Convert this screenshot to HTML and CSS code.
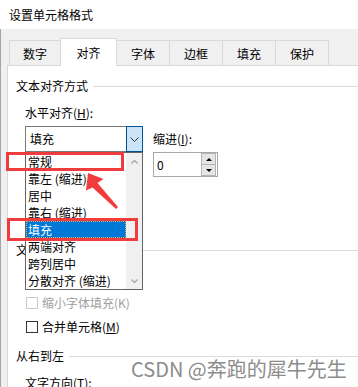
FILE: index.html
```html
<!DOCTYPE html>
<html lang="zh-CN">
<head>
    <meta charset="UTF-8">
    <meta name="viewport" content="width=device-width, initial-scale=1.0">
    <title>设置单元格格式</title>
    <link rel="stylesheet" href="styles.css">
</head>
<body>
    <div class="titlebar">设置单元格格式</div>

    <div class="dialog">
        <div class="tabs">
            <div class="tab tab-first">数字</div>
            <div class="tab active">对齐</div>
            <div class="tab">字体</div>
            <div class="tab">边框</div>
            <div class="tab">填充</div>
            <div class="tab tab-last">保护</div>
        </div>

        <div class="panel">
            <div class="group-title group-align">文本对齐方式</div>
            <div class="field-label">水平对齐(<u>H</u>):</div>
            <div class="align-row">
                <div class="combo open">
                    <span class="combo-text">填充</span>
                    <span class="combo-btn">
                        <svg width="9" height="5" viewBox="0 0 9 5"><polyline points="0.5,0.5 4.5,4.5 8.5,0.5" fill="none" stroke="#333" stroke-width="1"/></svg>
                    </span>
                    <div class="dropdown">
                        <ul class="dropdown-items">
                            <li>常规</li>
                            <li>靠左 (缩进)</li>
                            <li>居中</li>
                            <li>靠右 (缩进)</li>
                            <li class="selected">填充</li>
                            <li>两端对齐</li>
                            <li>跨列居中</li>
                            <li>分散对齐 (缩进)</li>
                        </ul>
                        <div class="scrollbar">
                            <svg width="7" height="4" viewBox="0 0 7 4"><polyline points="0.5,3.5 3.5,0.5 6.5,3.5" fill="none" stroke="#a6a6a6" stroke-width="1.3"/></svg>
                            <svg width="7" height="4" viewBox="0 0 7 4"><polyline points="0.5,0.5 3.5,3.5 6.5,0.5" fill="none" stroke="#a6a6a6" stroke-width="1.3"/></svg>
                        </div>
                    </div>
                </div>
                <div class="indent">
                    <div class="indent-label">缩进(<u>I</u>):</div>
                    <div class="spinner">
                        <span class="spin-value">0</span>
                        <span class="spin-btns">
                            <span class="spin-btn spin-up"></span>
                            <span class="spin-btn spin-down"></span>
                        </span>
                    </div>
                </div>
            </div>

            <!-- 文本控制 group: mostly hidden behind the open list -->
            <div class="group-title group-control">文</div>
            <div class="check-row check-first disabled"><span class="check"></span>缩小字体填充(K)</div>
            <div class="check-row"><span class="check"></span>合并单元格(<u>M</u>)</div>

            <div class="group-title group-rtl">从右到左</div>
            <div class="field-label field-dir">文字方向(<u>T</u>):</div>
        </div>
    </div>

    <div class="mark mark-normal"></div>
    <div class="mark mark-fill"></div>
    <svg class="arrow" width="358" height="387" viewBox="0 0 358 387">
        <polygon points="88,173 103.5,179 97.5,183 118,207 116,209 92.5,187.5 86,190.5" fill="#f03c3c"/>
    </svg>

    <div class="watermark">CSDN @奔跑的犀牛先生</div>
</body>
</html>
```

FILE: styles.css
```css
* {
    box-sizing: border-box;
}
body {
    margin: 0;
    width: 358px;
    height: 387px;
    overflow: hidden;
    position: relative;
    font-family: "Noto Sans CJK SC", "Microsoft YaHei", sans-serif;
    font-size: 12px;
    color: #000;
    background: #fff;
}
u {
    text-decoration-thickness: 1px;
    text-underline-offset: 1px;
}
.titlebar {
    height: 29px;
    padding: 7px 0 0 9px;
    line-height: 16px;
    background: #fff;
}
.dialog {
    height: 358px;
    padding-top: 9px;
    background: #f0f0f0;
    box-shadow: inset 1px 0 #a5a5a5;
    display: flex;
    flex-direction: column;
}
.tabs {
    display: flex;
    align-items: flex-end;
    margin-left: 9px;
}
.tab {
    width: 53px;
    height: 25px;
    border: 1px solid #d9d9d9;
    border-width: 1px 0 0 1px;
    background: #f0f0f0;
    display: flex;
    align-items: center;
    justify-content: center;
}
.tab-first {
    width: 51px;
}
.tab-last {
    width: 54px;
    border-right-width: 1px;
}
.tab.active {
    width: 57px;
    height: 28px;
    padding-bottom: 1px;
    margin: 0 -1px -1px 0;
    background: #fff;
    border-right-width: 1px;
    position: relative;
    z-index: 1;
}
.panel {
    flex: 1;
    margin-left: 7px;
    padding-left: 8px;
    background: #fff;
    border-top: 1px solid #d9d9d9;
    border-left: 1px solid #d9d9d9;
}
.group-title {
    display: flex;
    align-items: center;
    line-height: 16px;
    white-space: nowrap;
}
.group-title::after {
    content: "";
    flex: 1;
    height: 1px;
    margin-left: 5px;
    background: #dcdcdc;
}
.group-align {
    margin-top: 12px;
}
.group-control {
    margin-top: 65px;
}
.group-rtl {
    margin-top: 13px;
}
.field-label {
    margin: 11px 0 0 9px;
    line-height: 16px;
}
.align-row {
    display: flex;
    margin: 5px 0 0 9px;
}
.combo {
    position: relative;
    width: 118px;
    height: 26px;
    border: 1px solid #7a7a7a;
    display: flex;
}
.combo-text {
    flex: 1;
    padding-left: 4px;
    line-height: 24px;
}
.combo-btn {
    width: 17px;
    display: flex;
    align-items: center;
    justify-content: center;
}
.combo.open .combo-btn {
    margin: -1px -1px -1px 0;
    border: 1px solid #005499;
    background: #cce4f7;
}
.dropdown {
    position: absolute;
    left: -1px;
    top: 25px;
    width: 118px;
    height: 138px;
    border: 1px solid #646464;
    background: #fff;
    display: flex;
    z-index: 5;
}
.dropdown-items {
    list-style: none;
    margin: 0;
    padding: 0;
    width: 100px;
}
.dropdown-items li {
    height: 17px;
    line-height: 17px;
    padding-left: 2px;
    white-space: nowrap;
}
.dropdown-items li.selected {
    background: #0078d7;
    color: #fff;
    outline: 1px dotted #e0b060;
    outline-offset: -1px;
}
.scrollbar {
    width: 16px;
    padding: 7px 0 6px;
    background: #f0f0f0;
    display: flex;
    flex-direction: column;
    justify-content: space-between;
    align-items: center;
}
.scrollbar svg {
    display: block;
}
.indent {
    margin-left: 10px;
    padding-top: 5px;
}
.indent-label {
    line-height: 16px;
}
.spinner {
    margin-top: 5px;
    width: 65px;
    height: 25px;
    border: 1px solid #a8a8a8;
    display: flex;
}
.spin-value {
    flex: 1;
    padding-left: 3px;
    line-height: 23px;
}
.spin-btns {
    width: 15px;
    margin-right: 1px;
    display: flex;
    flex-direction: column;
}
.spin-btn {
    flex: 1;
    background: #e5e5e5;
    border: 1px solid #b4b4b4;
    display: flex;
    align-items: center;
    justify-content: center;
}
.spin-down {
    margin-top: -1px;
}
.spin-up::before,
.spin-down::before {
    content: "";
    border-left: 3px solid transparent;
    border-right: 3px solid transparent;
}
.spin-up::before {
    border-bottom: 3px solid #000;
}
.spin-down::before {
    border-top: 3px solid #000;
}
.check-row {
    display: flex;
    align-items: center;
    height: 16px;
    line-height: 16px;
    margin: 8px 0 0 10px;
    white-space: nowrap;
}
.check-first {
    margin-top: 37px;
}
.check {
    width: 12px;
    height: 12px;
    margin-right: 4px;
    border: 1px solid #333;
    background: #fff;
}
.check-row.disabled {
    color: #a0a0a0;
}
.check-row.disabled .check {
    border-color: #c8c8c8;
}
.field-dir {
    margin-top: 11px;
}
.mark {
    position: absolute;
    border: 3px solid #f03c3c;
    z-index: 10;
}
.mark-normal {
    left: 6px;
    top: 152px;
    width: 118px;
    height: 19px;
}
.mark-fill {
    left: 7px;
    top: 218px;
    width: 131px;
    height: 23px;
}
.arrow {
    position: absolute;
    left: 0;
    top: 0;
    z-index: 10;
    pointer-events: none;
}
.watermark {
    position: absolute;
    left: 131px;
    top: 357px;
    font-size: 20px;
    line-height: 24px;
    color: #8c8c8c;
    white-space: nowrap;
    text-shadow: 0 0 1px #fff;
    z-index: 10;
}
```
